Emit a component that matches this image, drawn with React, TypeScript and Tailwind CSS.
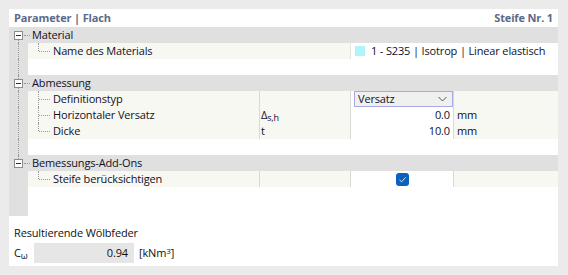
import React from "react";

const font = { fontFamily: "'Open Sans', 'Noto Sans', sans-serif" };

function Gutter({ up, down, box }: { up?: boolean; down?: boolean; box?: boolean }) {
  return (
    <div className="relative h-full w-[19px] shrink-0 bg-[#e0e0e0]">
      {up ? <div className="absolute left-[9px] top-0 h-[4px] border-l border-dotted border-[#9a9a9a]" /> : null}
      {down ? (
        <div
          className={`absolute left-[9px] border-l border-dotted border-[#9a9a9a] ${box ? "top-[13px] bottom-0" : "top-0 bottom-0"}`}
        />
      ) : null}
      {box ? (
        <div className="absolute left-[5px] top-[4px] flex h-[9px] w-[9px] items-center justify-center border border-[#8c8c8c] bg-white">
          <div className="h-px w-[5px] bg-[#333]" />
        </div>
      ) : null}
    </div>
  );
}

function Section({ title, up, down }: { title: string; up?: boolean; down?: boolean }) {
  return (
    <div className="relative flex h-4 bg-[#e0e0e0]">
      <Gutter up={up} down={down} box />
      <div className="absolute left-[15px] top-[8px] w-[6px] border-t border-dotted border-[#9a9a9a]" />
      <div className="pl-[4px] text-[11px] leading-4 text-[#10102a]">{title}</div>
    </div>
  );
}

function Branch({ last }: { last?: boolean }) {
  return (
    <>
      <div className={`absolute left-[10px] top-0 border-l border-dotted border-[#9a9a9a] ${last ? "h-[8px]" : "h-4"}`} />
      <div className="absolute left-[11px] top-[8px] w-[11px] border-t border-dotted border-[#9a9a9a]" />
    </>
  );
}

function Blank({ down, h = "h-4" }: { down?: boolean; h?: string }) {
  return (
    <div className={`flex ${h}`}>
      <Gutter down={down} />
      <div className="flex-1 bg-white" />
    </div>
  );
}

function Check() {
  return (
    <div className="flex h-[13px] w-[13px] items-center justify-center rounded-[3px] bg-[#0b61be]">
      <svg width="9" height="9" viewBox="0 0 9 9">
        <path d="M1.5 4.8 L3.6 6.8 L7.6 2.4" fill="none" stroke="#d8e6f7" strokeWidth="1" />
      </svg>
    </div>
  );
}

function DataRow({
  label,
  symbol,
  value,
  unit,
  last,
  down,
}: {
  label: string;
  symbol?: React.ReactNode;
  value?: React.ReactNode;
  unit?: string;
  last?: boolean;
  down?: boolean;
}) {
  return (
    <div className="flex h-4 text-[11px] leading-4 text-[#10102a]">
      <Gutter down={down} />
      <div className="relative w-[231px] shrink-0 bg-[#f8f8f3] pl-[25px]">
        <Branch last={last} />
        {label}
      </div>
      <div className="w-[91px] shrink-0 border-l border-[#d9d9d9] bg-[#f8f8f3] pl-[1px]">{symbol}</div>
      <div className="flex w-[103px] shrink-0 items-center justify-end border-l border-[#d9d9d9] bg-white pr-[3px]">
        {value}
      </div>
      <div className="flex-1 border-l border-[#d9d9d9] bg-[#f8f8f3] pl-[3px]">{unit}</div>
    </div>
  );
}

export default function App() {
  return (
    <div className="h-[275px] w-[568px] bg-[#ebebeb] pl-[9px] pt-[9px] tracking-[-0.15px]" style={font}>
      <div className="flex h-[257px] w-[549px] flex-col bg-white">
        <div className="flex h-[18px] items-center justify-between px-[5px] text-[11px] font-bold text-[#5c6a8a]">
          <span>Parameter | Flach</span>
          <span>Steife Nr. 1</span>
        </div>

        <Section title="Material" down />
        <div className="flex h-4 text-[11px] leading-4 text-[#10102a]">
          <Gutter down />
          <div className="relative w-[322px] shrink-0 bg-[#f8f8f3] pl-[25px]">
            <Branch last />
            Name des Materials
          </div>
          <div className="flex flex-1 items-center border-l border-[#e4e4e4] bg-white pl-[4px]">
            <div className="mr-[6px] h-[10px] w-[10px] bg-[#aef4f8]" />
            1 - S235 | Isotrop | Linear elastisch
          </div>
        </div>
        <Blank down />

        <Section title="Abmessung" up down />
        <DataRow
          label="Definitionstyp"
          down
          value={
            <div className="-mr-[3px] flex h-4 w-full items-center justify-between border border-[#a9a9e6] bg-[#f0f0f0] pl-[3px] pr-[5px]">
              <span>Versatz</span>
              <svg width="9" height="6" viewBox="0 0 9 6">
                <path d="M0.5 1 L4.5 5 L8.5 1" fill="none" stroke="#555" strokeWidth="1" />
              </svg>
            </div>
          }
        />
        <DataRow
          label="Horizontaler Versatz"
          down
          symbol={
            <span>
              Δ<span className="relative top-[2px] text-[9px]">s,h</span>
            </span>
          }
          value="0.0"
          unit="mm"
        />
        <DataRow label="Dicke" down last symbol="t" value="10.0" unit="mm" />
        <Blank down />

        <Section title="Bemessungs-Add-Ons" up />
        <DataRow
          label="Steife berücksichtigen"
          last
          value={
            <div className="mx-auto pl-[3px]">
              <Check />
            </div>
          }
        />
        <Blank h="h-[29px]" />

        <div className="flex flex-col px-[5px] pt-[9px] text-[11px] text-[#111]">
          <div className="leading-4">Resultierende Wölbfeder</div>
          <div className="mt-[2px] flex h-5 items-center leading-4">
            <span className="w-[20px]">
              C<span className="relative top-[2px] text-[9px]">ω</span>
            </span>
            <div className="flex h-5 w-[100px] items-center justify-end bg-[#e6e6e6] pr-[6px]">0.94</div>
            <span className="ml-[5px]">
              [kNm<span className="relative -top-[3px] text-[8px]">3</span>]
            </span>
          </div>
        </div>
      </div>
    </div>
  );
}
